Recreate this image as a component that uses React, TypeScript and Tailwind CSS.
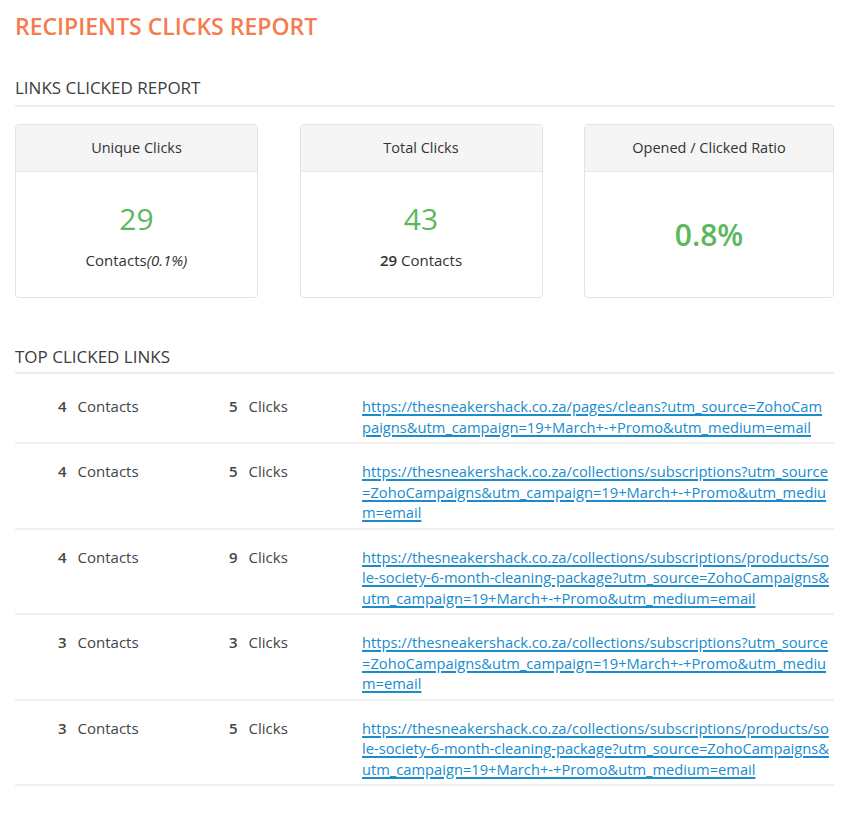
const links = [
  {
    contacts: 4,
    clicks: 5,
    url: "https://thesneakershack.co.za/pages/cleans?utm_source=ZohoCampaigns&utm_campaign=19+March+-+Promo&utm_medium=email",
  },
  {
    contacts: 4,
    clicks: 5,
    url: "https://thesneakershack.co.za/collections/subscriptions?utm_source=ZohoCampaigns&utm_campaign=19+March+-+Promo&utm_medium=email",
  },
  {
    contacts: 4,
    clicks: 9,
    url: "https://thesneakershack.co.za/collections/subscriptions/products/sole-society-6-month-cleaning-package?utm_source=ZohoCampaigns&utm_campaign=19+March+-+Promo&utm_medium=email",
  },
  {
    contacts: 3,
    clicks: 3,
    url: "https://thesneakershack.co.za/collections/subscriptions?utm_source=ZohoCampaigns&utm_campaign=19+March+-+Promo&utm_medium=email",
  },
  {
    contacts: 3,
    clicks: 5,
    url: "https://thesneakershack.co.za/collections/subscriptions/products/sole-society-6-month-cleaning-package?utm_source=ZohoCampaigns&utm_campaign=19+March+-+Promo&utm_medium=email",
  },
];

function SectionTitle({ children, tight }: { children: React.ReactNode; tight?: boolean }) {
  return (
    <div className={`border-b-2 border-[#ececec] ${tight ? "pb-[3px]" : "pb-[5px]"}`}>
      <h2 className="text-[17px] leading-[24px] text-[#3d3d3d]">{children}</h2>
    </div>
  );
}

function StatCard({ title, children }: { title: string; children: React.ReactNode }) {
  return (
    <div className="flex h-[174px] flex-col overflow-hidden rounded-[4px] border border-[#e3e3e3] bg-white">
      <div className="flex h-[47px] items-center justify-center border-b border-[#e8e8e8] bg-[#f5f5f5] text-[14.5px] text-[#333]">
        {title}
      </div>
      <div className="flex-1">{children}</div>
    </div>
  );
}

export default function App() {
  return (
    <div className="min-h-screen bg-white font-['Open_Sans',sans-serif] text-[#333]">
      <div className="ml-[15px] w-[819px]">
        <h1 className="pt-[12px] text-[23px] font-semibold leading-[29px] text-[#f47c4e]">
          RECIPIENTS CLICKS REPORT
        </h1>

        <section className="mt-[35px]">
          <SectionTitle>LINKS CLICKED REPORT</SectionTitle>

          <div className="mt-[17px] grid grid-cols-[243px_243px_250px] justify-between">
            <StatCard title="Unique Clicks">
              <div className="flex flex-col items-center pt-[29px]">
                <span className="text-[30px] leading-[36px] text-[#5cb85c]">29</span>
                <span className="mt-[12px] text-[15px] leading-[22px] text-[#333]">
                  Contacts<i>(0.1%)</i>
                </span>
              </div>
            </StatCard>
            <StatCard title="Total Clicks">
              <div className="flex flex-col items-center pt-[29px]">
                <span className="text-[30px] leading-[36px] text-[#5cb85c]">43</span>
                <span className="mt-[12px] text-[15px] leading-[22px] text-[#333]">
                  <b className="font-semibold">29</b> Contacts
                </span>
              </div>
            </StatCard>
            <StatCard title="Opened / Clicked Ratio">
              <div className="flex h-full items-center justify-center">
                <span className="text-[30px] font-semibold leading-[36px] text-[#5cb85c]">0.8%</span>
              </div>
            </StatCard>
          </div>
        </section>

        <section className="mt-[47px]">
          <SectionTitle tight>TOP CLICKED LINKS</SectionTitle>

          <div className="pt-[5px]">
            {links.map((link, i) => (
              <div
                key={i}
                className="flex border-b-2 border-[#f0f0f0] pt-[17px] pb-[5px] text-[15px] leading-[20.5px] text-[#444]"
              >
                <div className="flex w-[214px] gap-[11px] pl-[43px]">
                  <span className="font-semibold">{link.contacts}</span>
                  <span>Contacts</span>
                </div>
                <div className="flex w-[133px] gap-[11px]">
                  <span className="font-semibold">{link.clicks}</span>
                  <span>Clicks</span>
                </div>
                <a
                  href="#"
                  className="w-[468px] break-all text-[14.7px] text-[#1a8ccc] underline decoration-[2px] underline-offset-[2px]"
                >
                  {link.url}
                </a>
              </div>
            ))}
          </div>
        </section>
      </div>
    </div>
  );
}
